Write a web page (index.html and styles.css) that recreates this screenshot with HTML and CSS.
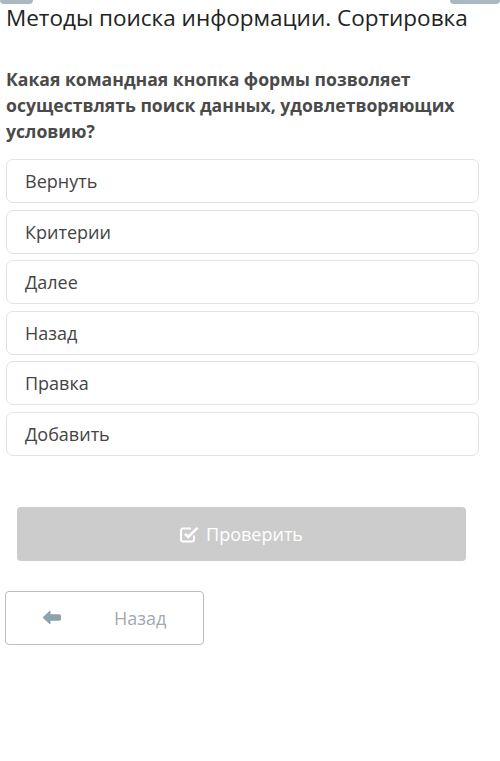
FILE: index.html
```html
<!DOCTYPE html>
<html lang="ru">
<head>
<meta charset="utf-8">
<link rel="stylesheet" href="styles.css">
</head>
<body>
<div class="topbar">
  <span class="tab tab-left"></span>
  <span class="tab tab-right"></span>
</div>
<h1 class="title">Методы поиска информации. Сортировка</h1>
<p class="question">Какая командная кнопка формы позволяет осуществлять поиск данных, удовлетворяющих условию?</p>
<div class="options">
  <div class="option">Вернуть</div>
  <div class="option">Критерии</div>
  <div class="option">Далее</div>
  <div class="option">Назад</div>
  <div class="option">Правка</div>
  <div class="option">Добавить</div>
</div>
<div class="check-wrap">
  <div class="check-btn">
    <svg class="check-icon" width="19" height="17" viewBox="0 0 19 17">
      <path d="M14 9.5V13.5a2 2 0 0 1-2 2H3a2 2 0 0 1-2-2V4.5a2 2 0 0 1 2-2H11" fill="none" stroke="#fff" stroke-width="2"/>
      <path d="M5 7.8l3.2 3.2L17.5 1.8" fill="none" stroke="#fff" stroke-width="2.6"/>
    </svg>
    <span>Проверить</span>
  </div>
</div>
<div class="back-btn">
  <svg class="back-icon" width="19" height="15" viewBox="0 0 19 15">
    <path d="M1 7.5L8 1V4.8H17.5a1 1 0 0 1 1 1V9.2a1 1 0 0 1-1 1H8V14Z" fill="#8ea2ae" stroke="#8ea2ae" stroke-width="1" stroke-linejoin="round"/>
  </svg>
  <span class="back-text">Назад</span>
</div>
</body>
</html>
```

FILE: styles.css
```css
html, body {
  margin: 0;
  padding: 0;
  background: #fff;
  font-family: "Open Sans", "Noto Sans", sans-serif;
}
body {
  width: 500px;
  height: 761px;
  overflow: hidden;
}
.topbar {
  height: 0;
  position: relative;
}
.tab {
  position: absolute;
  top: 0;
  height: 4px;
  background: #a9b8c1;
  border-radius: 0 0 4px 4px;
}
.tab-left { left: 0; width: 33px; }
.tab-right { right: 0; width: 50px; }
.title {
  margin: 0;
  padding: 2px 0 0 6px;
  font-size: 22.5px;
  font-weight: 400;
  line-height: 32px;
  color: #222;
  white-space: nowrap;
}
.question {
  margin: 32px 0 0 6px;
  width: 485px;
  font-size: 17.6px;
  font-weight: 700;
  line-height: 26px;
  color: #4a4a4a;
}
.options {
  margin: 15px 0 0 6px;
  width: 473px;
  display: flex;
  flex-direction: column;
  gap: 6.5px;
}
.option {
  box-sizing: border-box;
  height: 44px;
  border: 1.5px solid #e2e2e2;
  border-radius: 7px;
  padding: 0 0 0 18px;
  display: flex;
  align-items: center;
  font-size: 18px;
  color: #444;
}
.check-wrap {
  margin: 51px 0 0 17px;
}
.check-btn {
  width: 449px;
  height: 54px;
  background: #cccccc;
  border-radius: 4px;
  display: flex;
  align-items: center;
  justify-content: center;
  gap: 7px;
  color: #fff;
  font-size: 18px;
}
.check-icon { margin-top: 1px; }
.back-btn {
  box-sizing: border-box;
  margin: 30px 0 0 5px;
  width: 199px;
  height: 54px;
  border: 1.5px solid #b7c0c6;
  border-radius: 4px;
  display: flex;
  align-items: center;
  padding-left: 36px;
}
.back-text {
  margin-left: 53px;
  font-size: 18px;
  color: #a0aab1;
}
```
